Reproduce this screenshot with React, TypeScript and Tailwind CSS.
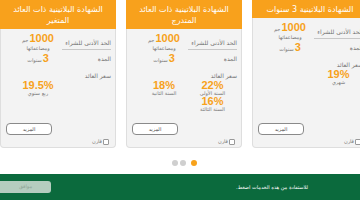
import React from 'react';

// Certificate carousel snapshot: three cards, pager dots, green consent bar
type Rate = { value: string; note: string };

interface Certificate {
  title: string[];
  minimum: string;
  duration: string;
  rates: (Rate | null)[];
}

const certificates: Certificate[] = [
  {
    title: ['الشهادة البلاتينية ذات العائد', 'المتغير'],
    minimum: '1000',
    duration: '3',
    rates: [{ value: '19.5%', note: 'ربع سنوي' }, null],
  },
  {
    title: ['الشهادة البلاتينية ذات العائد', 'المتدرج'],
    minimum: '1000',
    duration: '3',
    rates: [
      { value: '18%', note: 'السنة الثانية' },
      { value: '22%', note: 'السنة الأولى' },
      null,
      { value: '16%', note: 'السنة الثالثة' },
    ],
  },
  {
    title: ['الشهادة البلاتينية 3 سنوات'],
    minimum: '1000',
    duration: '3',
    rates: [null, { value: '19%', note: 'شهري' }],
  },
];

const arabic = { fontFamily: '"DejaVu Sans", "Noto Sans", sans-serif' };
const latin = { fontFamily: '"Liberation Sans", Arial, sans-serif' };

function RateCell({ rate }: { rate: Rate | null }) {
  if (!rate) return <div />;
  return (
    <div className="flex flex-col items-center">
      <span className="text-[11px] font-bold leading-[9px] text-[#f7a21b]" style={latin}>
        {rate.value}
      </span>
      <span dir="rtl" className="text-[5px] leading-[7px] text-[#777]" style={arabic}>
        {rate.note}
      </span>
    </div>
  );
}

function CertificateCard({ cert }: { cert: Certificate }) {
  return (
    <div className="flex w-[116px] shrink-0 flex-col">
      <div
        dir="rtl"
        className="bg-[#f8a11c] px-1 pt-[4px] pb-[3px] text-center text-[8px] leading-[11px] text-white"
        style={arabic}
      >
        {cert.title.map((line) => (
          <div key={line}>{line}</div>
        ))}
      </div>
      <div className="flex flex-1 flex-col rounded-b-[4px] border border-t-0 border-[#dedede] bg-[#f3f3f3] pt-[4px] pr-[4px] pb-[2px] pl-[13px]">
        <div className="grid grid-cols-[48px_1fr] items-center">
          <div className="flex flex-col items-center">
            <div className="flex items-end gap-[1px]">
              <span dir="rtl" className="text-[5px] leading-[8px] text-[#777]" style={arabic}>
                جم
              </span>
              <span className="text-[11px] font-bold leading-[11px] text-[#f7a21b]" style={latin}>
                {cert.minimum}
              </span>
            </div>
            <span dir="rtl" className="text-[5px] leading-[9px] text-[#777]" style={arabic}>
              ومضاعفاتها
            </span>
          </div>
          <div
            dir="rtl"
            className="mt-[2px] border-b border-[#c8c8c8] pb-[2px] text-[6px] leading-[9px] text-[#737373]"
            style={arabic}
          >
            الحد الأدنى للشراء
          </div>
        </div>
        <div className="grid grid-cols-[48px_1fr] items-center">
          <div className="flex items-end justify-center gap-[1px]">
            <span dir="rtl" className="text-[5px] leading-[8px] text-[#777]" style={arabic}>
              سنوات
            </span>
            <span className="text-[11px] font-bold leading-[11px] text-[#f7a21b]" style={latin}>
              {cert.duration}
            </span>
          </div>
          <div dir="rtl" className="text-[6px] leading-[9px] text-[#737373]" style={arabic}>
            المدة
          </div>
        </div>
        <div dir="rtl" className="mt-[7px] text-[6px] leading-[9px] text-[#737373]" style={arabic}>
          سعر العائد
        </div>
        <div className="mt-[1px] grid grid-cols-[48px_1fr]">
          {cert.rates.map((rate, i) => (
            <RateCell key={i} rate={rate} />
          ))}
        </div>
        <div className="mt-auto flex flex-col pt-2">
          <button
            className="-ml-[8px] block h-[12px] w-[46px] rounded-[4px] border border-[#8a8a8a] bg-white text-[5px] leading-[10px] text-[#444]"
            style={arabic}
          >
            المزيد
          </button>
          <label className="mt-[3px] flex items-center justify-end gap-[1px] pr-[2px]">
            <span className="text-[5px] leading-[7px] text-[#777]" style={arabic}>
              قارن
            </span>
            <span className="h-[6px] w-[6px] rounded-[1px] border border-[#999] bg-white" />
          </label>
        </div>
      </div>
    </div>
  );
}

export default function App() {
  return (
    <div className="relative flex h-[200px] w-[360px] flex-col overflow-hidden bg-white">
      <div className="flex h-[148px] gap-[10px]">
        {certificates.map((cert) => (
          <CertificateCard key={cert.title.join(' ')} cert={cert} />
        ))}
      </div>
      <div className="mt-[12px] flex justify-center gap-[2px] pl-[9px]">
        <span className="h-[6px] w-[6px] rounded-full bg-[#cfcfcf]" />
        <span className="h-[6px] w-[6px] rounded-full bg-[#cfcfcf]" />
        <span className="ml-[3px] h-[6px] w-[6px] rounded-full bg-[#f7a21b]" />
      </div>
      <div className="mt-auto flex h-[26px] items-center justify-between bg-[#0b6a3d] pr-[52px]">
        <button
          className="h-[12px] w-[51px] rounded-r-[3px] bg-[#b5cdbf] text-[5px] text-[#8ea597]"
          style={arabic}
        >
          موافق
        </button>
        <span dir="rtl" className="text-[5px] leading-[8px] text-white" style={arabic}>
          للاستفادة من هذه الخدمات اضغط.
        </span>
      </div>
    </div>
  );
}
